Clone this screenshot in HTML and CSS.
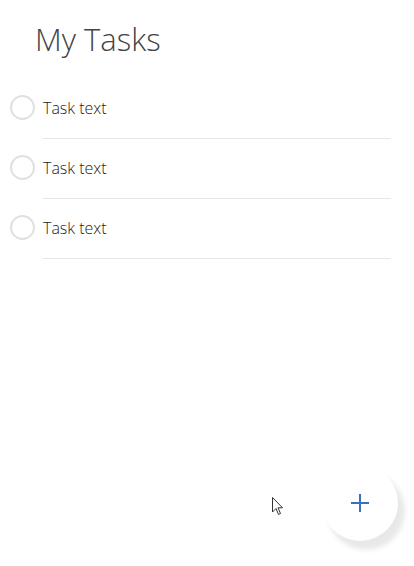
FILE: index.html
```html
<!DOCTYPE html>
<html>
<head>
<meta charset="utf-8">
<link rel="stylesheet" href="styles.css">
</head>
<body>
<div class="app">
  <h1 class="title">My Tasks</h1>
  <ul class="tasks">
    <li class="task"><span class="check"></span><span class="text">Task text</span></li>
    <li class="task"><span class="check"></span><span class="text">Task text</span></li>
    <li class="task"><span class="check"></span><span class="text">Task text</span></li>
  </ul>
  <svg class="cursor" width="12" height="19" viewBox="0 0 12 19"><path d="M0.5 0.5 L0.5 15 L4 11.5 L6.5 17.5 L8.5 16.5 L6 10.8 L10.5 10.8 Z" fill="#fff" stroke="#333" stroke-width="1"/></svg>
  <button class="fab"><svg width="20" height="20" viewBox="0 0 20 20"><path d="M10 1 V19 M1 10 H19" stroke="#3b6fc1" stroke-width="2"/></svg></button>
</div>
</body>
</html>
```

FILE: styles.css
```css
html, body {
  margin: 0;
  padding: 0;
  background: #fff;
}
.app {
  position: relative;
  width: 414px;
  height: 566px;
  overflow: hidden;
  font-family: "Open Sans", "Liberation Sans", sans-serif;
}
.title {
  margin: 0;
  padding: 17px 0 0 35px;
  font-size: 31px;
  font-weight: 300;
  line-height: 44px;
  color: #444;
}
.tasks {
  list-style: none;
  margin: 18px 0 0 0;
  padding: 0;
}
.task {
  display: flex;
  align-items: center;
  height: 60px;
  padding-left: 10px;
}
.check {
  width: 21px;
  height: 21px;
  border: 2px solid #e0e0e0;
  border-radius: 50%;
  flex: none;
  margin-right: 8px;
  margin-bottom: 3px;
}
.text {
  flex: 1;
  align-self: stretch;
  display: flex;
  align-items: center;
  margin-right: 23px;
  border-bottom: 1px solid #e6e6e6;
  font-size: 16px;
  font-weight: 300;
  color: #222;
  padding-bottom: 1px;
}
.cursor {
  position: absolute;
  left: 272px;
  top: 497px;
}
.fab {
  position: absolute;
  left: 322px;
  top: 465px;
  width: 76px;
  height: 76px;
  border: none;
  border-radius: 50%;
  background: #fff;
  box-shadow: 6px 8px 5px 1px rgba(0, 0, 0, 0.09);
  padding: 0;
  display: flex;
  align-items: center;
  justify-content: center;
}
```
